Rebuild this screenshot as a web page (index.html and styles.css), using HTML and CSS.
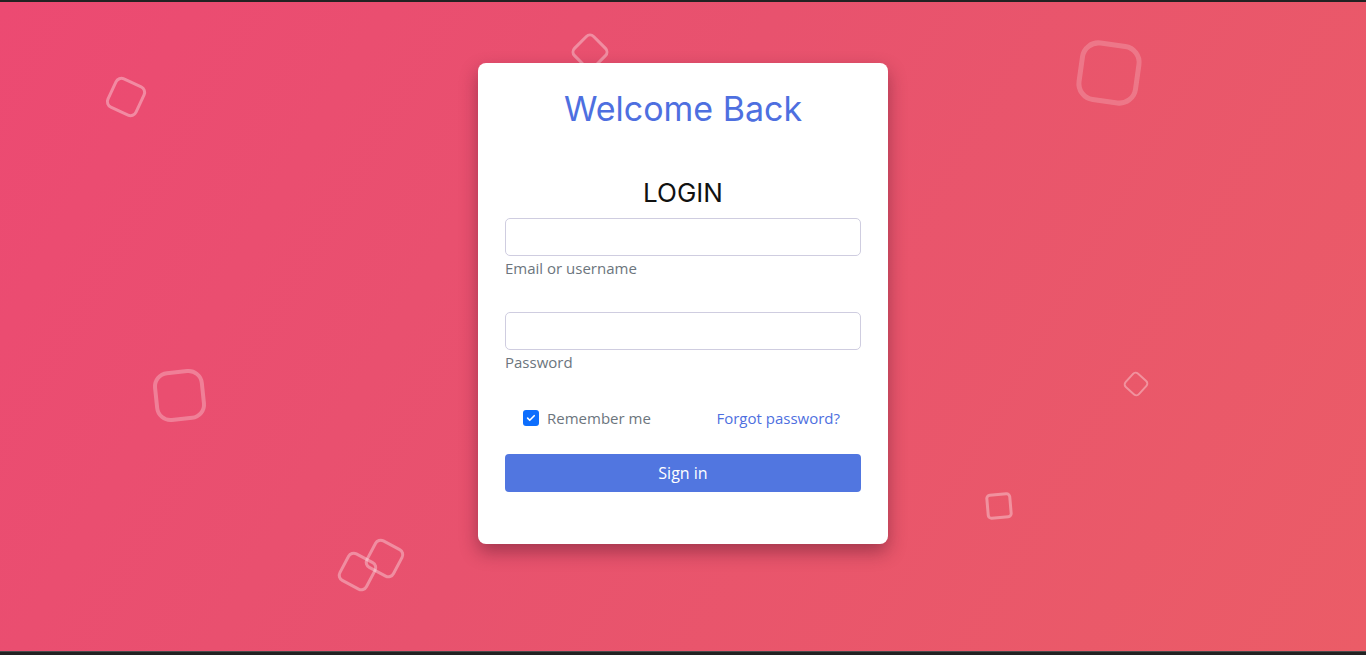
FILE: index.html
```html
<!DOCTYPE html>
<html lang="en">
<head>
<meta charset="utf-8">
<title>Login</title>
<link rel="stylesheet" href="styles.css">
</head>
<body>
<div class="stage">
  <ul class="shapes">
    <li class="shape s1"></li>
    <li class="shape s2"></li>
    <li class="shape s3"></li>
    <li class="shape s4"></li>
    <li class="shape s5"></li>
    <li class="shape s6"></li>
    <li class="shape s7"></li>
    <li class="shape s8"></li>
  </ul>
  <form class="card">
    <h1 class="title">Welcome Back</h1>
    <h2 class="subtitle">LOGIN</h2>
    <div class="field">
      <input class="input" type="text" id="user">
      <label class="label" for="user">Email or username</label>
    </div>
    <div class="field">
      <input class="input" type="password" id="pass">
      <label class="label" for="pass">Password</label>
    </div>
    <div class="row">
      <label class="remember">
        <span class="check">
          <svg viewBox="0 0 16 16" width="12" height="12"><path d="M3.5 8.2l2.8 2.8 6-6" fill="none" stroke="#fff" stroke-width="2.2" stroke-linecap="round" stroke-linejoin="round"/></svg>
        </span>
        Remember me
      </label>
      <a class="forgot" href="#">Forgot password?</a>
    </div>
    <button class="btn" type="button">Sign in</button>
  </form>
</div>
</body>
</html>
```
FILE: styles.css
```css
html, body {
  margin: 0;
  padding: 0;
}
body {
  width: 1366px;
  height: 655px;
  overflow: hidden;
  background: #222;
}
.stage {
  position: relative;
  box-sizing: border-box;
  height: 650px;
  margin-top: 2px;
  background: linear-gradient(120deg, #ec4a72 0%, #e8526e 45%, #eb5c67 100%);
  display: flex;
  justify-content: center;
  align-items: flex-start;
  padding-top: 61px;
  overflow: hidden;
  border-bottom: 1px solid #4a4a4a;
}
.shapes {
  list-style: none;
  margin: 0;
  padding: 0;
}
.shape {
  position: absolute;
  box-sizing: border-box;
  border: 3px solid rgba(255, 255, 255, 0.35);
  border-radius: 22%;
}
.s1 { left: 109px; top: 78px; width: 34px; height: 34px; transform: rotate(25deg); }
.s2 { left: 575px; top: 35px; width: 30px; height: 30px; transform: rotate(45deg); }
.s3 { left: 1078px; top: 40px; width: 62px; height: 62px; border-width: 5px; border-color: rgba(255,255,255,0.2); border-radius: 30%; transform: rotate(8deg); }
.s4 { left: 154px; top: 368px; width: 51px; height: 51px; border-width: 4px; border-color: rgba(255,255,255,0.28); border-radius: 30%; transform: rotate(-6deg); }
.s5 { left: 1126px; top: 372px; width: 20px; height: 20px; border-width: 2px; transform: rotate(42deg); }
.s6 { left: 986px; top: 491px; width: 26px; height: 26px; transform: rotate(-5deg); border-radius: 18%; }
.s7 { left: 341px; top: 553px; width: 33px; height: 33px; transform: rotate(28deg); }
.s8 { left: 368px; top: 540px; width: 33px; height: 33px; transform: rotate(28deg); }

.card {
  position: relative;
  width: 410px;
  height: 481px;
  box-sizing: border-box;
  background: #fff;
  border-radius: 8px;
  box-shadow: 0 8px 18px rgba(80, 20, 40, 0.45);
  padding: 23px 27px 0;
  display: flex;
  flex-direction: column;
  font-family: "Open Sans", "Noto Sans", sans-serif;
}
.title {
  margin: 0;
  text-align: center;
  font-family: "Inter", "Noto Sans", sans-serif;
  font-weight: 400;
  font-size: 34px;
  line-height: 46px;
  color: #4e6fe0;
}
.subtitle {
  margin: 45px 0 0;
  text-align: center;
  font-family: "Inter", "Noto Sans", sans-serif;
  font-weight: 400;
  font-size: 26px;
  line-height: 32px;
  color: #111;
}
.field {
  display: flex;
  flex-direction: column;
  margin-top: 9px;
}
.field + .field {
  margin-top: 34px;
}
.input {
  box-sizing: border-box;
  width: 356px;
  height: 38px;
  margin: 0;
  border: 1px solid #cfcde0;
  border-radius: 5px;
  background: #fff;
}
.label {
  margin-top: 2px;
  font-size: 15px;
  line-height: 20px;
  color: #6c757d;
}
.row {
  display: flex;
  justify-content: space-between;
  align-items: center;
  margin-top: 36px;
  padding: 0 21px 0 18px;
  font-size: 15px;
  line-height: 20px;
}
.remember {
  display: flex;
  align-items: center;
  gap: 8px;
  color: #6c757d;
}
.check {
  width: 16px;
  height: 16px;
  border-radius: 3px;
  background: #0d6efd;
  display: flex;
  align-items: center;
  justify-content: center;
}
.forgot {
  color: #4e6fe0;
  text-decoration: none;
}
.btn {
  margin-top: 26px;
  width: 356px;
  height: 38px;
  border: 0;
  border-radius: 4px;
  background: #5176e0;
  color: #fff;
  font-family: "Open Sans", "Noto Sans", sans-serif;
  font-size: 16px;
}
```
